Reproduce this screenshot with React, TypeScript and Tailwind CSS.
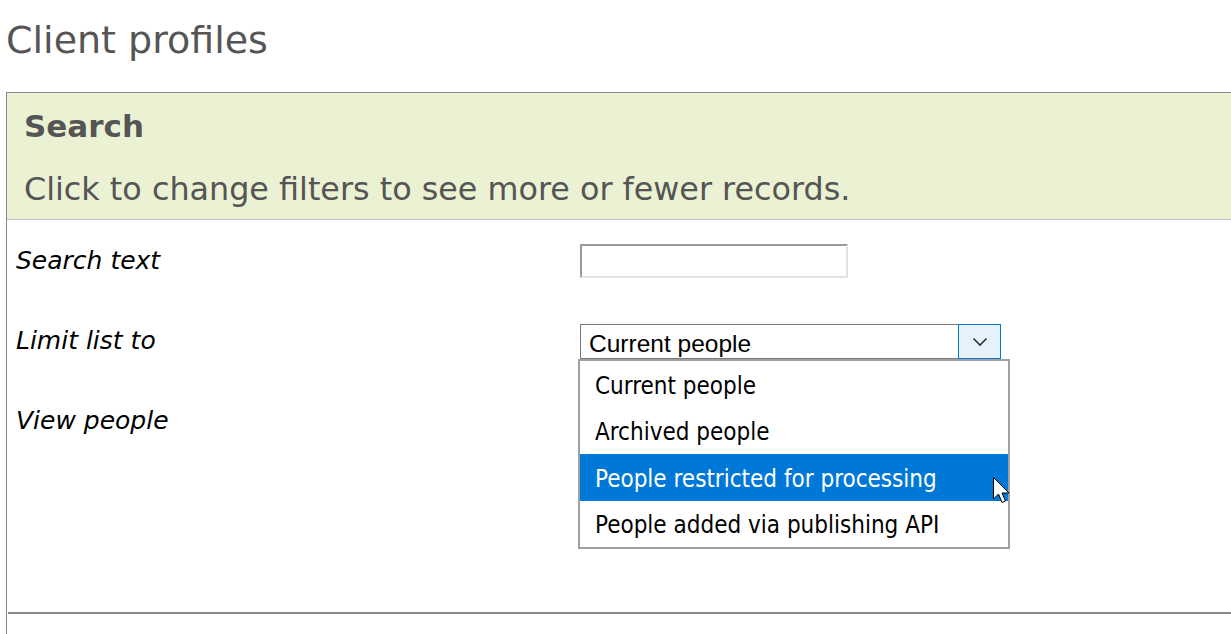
import React from 'react';

const options = [
  'Current people',
  'Archived people',
  'People restricted for processing',
  'People added via publishing API',
];

function Chevron() {
  return (
    <svg width="16" height="10" viewBox="0 0 16 10" fill="none">
      <path d="M1.5 1.5 L8 8 L14.5 1.5" stroke="#333" strokeWidth="1.6" />
    </svg>
  );
}

function Cursor() {
  return (
    <svg width="18" height="28" viewBox="0 0 18 28" className="absolute left-[413px] top-[153px] z-20">
      <path
        d="M0.5 0.5 L0.5 22 L5.5 17 L9 25.5 L12.5 24 L9 16 L16 16 Z"
        fill="#fff"
        stroke="#000"
        strokeWidth="1"
        strokeLinejoin="miter"
      />
    </svg>
  );
}

export default function App() {
  return (
    <div className="min-h-[634px] bg-white font-['DejaVu_Sans',Verdana,sans-serif] overflow-hidden">
      <h1 className="pl-[6px] pt-[18px] text-[38px] leading-[44px] text-[#555] font-normal">
        Client profiles
      </h1>

      <div className="ml-[6px] mt-[30px] border-l border-t border-[#888] min-h-[542px]">
        <div className="bg-[#ebf2d3] border-b border-[#c4c4c4] pl-[17px] pt-[15px] pb-[11px] text-[#555]">
          <h2 className="text-[31px] leading-[36px] font-bold">Search</h2>
          <p className="mt-[26px] text-[31.8px] leading-[38px]">
            Click to change filters to see more or fewer records.
          </p>
        </div>

        <div className="pt-[24px] pl-[9px] pb-[128px]">
          <div className="grid grid-cols-[564px_1fr] h-[80px]">
            <label className="pt-[2px] italic text-[25px] leading-[30px] text-black">Search text</label>
            <div>
              <input
                type="text"
                className="w-[268px] h-[34px] border-2 border-t-[#9a9a9a] border-l-[#9a9a9a] border-b-[#e3e3e3] border-r-[#e3e3e3] outline-none"
              />
            </div>
          </div>

          <div className="grid grid-cols-[564px_1fr] h-[80px]">
            <label className="pt-[2px] italic text-[25px] leading-[30px] text-black">Limit list to</label>
            <div className="relative">
              <div className="flex w-[421px] h-[35px] border border-[#7a7a7a] bg-white">
                <span className="flex-1 pl-[8px] pt-[2px] font-['Liberation_Sans',Arial,sans-serif] text-[24.5px] leading-[33px] text-black">
                  Current people
                </span>
                <span className="-m-px flex w-[43px] h-[35px] items-center justify-center border border-[#0078d7] bg-[#e5f1fb]">
                  <Chevron />
                </span>
              </div>

              <ul className="absolute left-[-2px] top-[35px] z-10 w-[432px] border-2 border-[#a0a0a0] bg-white font-['DejaVu_Sans_Condensed','DejaVu_Sans',sans-serif] text-[24px]">
                {options.map((o, i) => (
                  <li
                    key={o}
                    className={
                      i === 2
                        ? 'h-[46.5px] flex items-center pl-[15px] pt-[3px] bg-[#0078d7] text-white'
                        : 'h-[46.5px] flex items-center pl-[15px] pt-[3px] text-black'
                    }
                  >
                    {o}
                  </li>
                ))}
              </ul>
              <Cursor />
            </div>
          </div>

          <div className="grid grid-cols-[564px_1fr] h-[80px]">
            <label className="pt-[2px] italic text-[25px] leading-[30px] text-black">View people</label>
            <div />
          </div>
        </div>

        <div className="ml-px h-[2px] bg-[#888]" />
      </div>
    </div>
  );
}
